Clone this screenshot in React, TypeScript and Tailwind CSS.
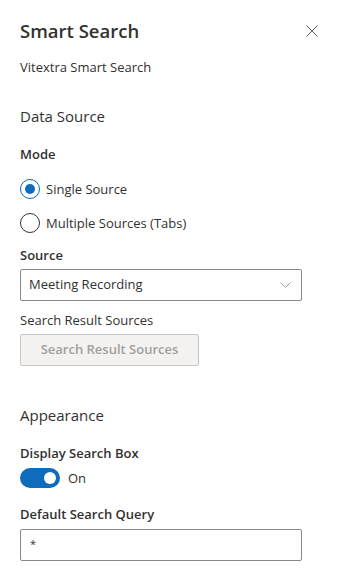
import React from "react";

const font = { fontFamily: '"Segoe UI", "Open Sans", "Liberation Sans", sans-serif' };

const Label = ({ children, className = "" }: { children: React.ReactNode; className?: string }) => (
  <div className={`text-[13px] leading-[20px] font-semibold text-[#323130] ${className}`}>{children}</div>
);

const Radio = ({ checked, label, className = "" }: { checked?: boolean; label: string; className?: string }) => (
  <div className={`flex items-center h-[20px] ${className}`}>
    <span
      className={`w-[20px] h-[20px] rounded-full border flex items-center justify-center ${
        checked ? "border-[#0f6cbd]" : "border-[#323130]"
      }`}
    >
      {checked && <span className="w-[10px] h-[10px] rounded-full bg-[#0f6cbd]" />}
    </span>
    <span className="ml-[6px] text-[13px] leading-[20px] text-[#323130]">{label}</span>
  </div>
);

export default function App() {
  return (
    <div className="w-[340px] h-[574px] bg-white overflow-hidden pl-[20px]" style={font}>
      {/* HEADER */}
      <div className="flex items-center justify-between pt-[17px] pr-[20px]">
        <h1 className="text-[18.5px] leading-[28px] font-semibold text-[#323130]">Smart Search</h1>
        <svg width="12" height="12" viewBox="0 0 12 12" className="mr-[2px]">
          <path d="M0.5 0.5 L11.5 11.5 M11.5 0.5 L0.5 11.5" stroke="#605e5c" strokeWidth="1" />
        </svg>
      </div>
      <p className="mt-[12px] text-[13px] leading-[20px] text-[#323130]">Vitextra Smart Search</p>

      {/* DATA SOURCE */}
      <div className="mt-[29px] text-[15px] leading-[20px] text-[#323130]">Data Source</div>
      <Label className="mt-[18px]">Mode</Label>
      <Radio checked label="Single Source" className="mt-[15px]" />
      <Radio label="Multiple Sources (Tabs)" className="mt-[14px]" />

      <Label className="mt-[12px]">Source</Label>
      <div className="mt-[4px] w-[282px] h-[32px] border border-[#8a8886] rounded-[2px] flex items-center justify-between pl-[8px] pr-[10px]">
        <span className="text-[13px] text-[#323130]">Meeting Recording</span>
        <svg width="11" height="6" viewBox="0 0 11 6">
          <path d="M0.5 0.5 L5.5 5.5 L10.5 0.5" fill="none" stroke="#a19f9d" strokeWidth="1" />
        </svg>
      </div>

      <div className="mt-[9px] text-[13px] leading-[20px] text-[#323130]">Search Result Sources</div>
      <button
        disabled
        className="mt-[4px] w-[179px] h-[32px] bg-[#f3f2f1] border border-[#c8c6c4] rounded-[2px] text-[13px] font-semibold text-[#a19f9d]"
      >
        Search Result Sources
      </button>

      {/* APPEARANCE */}
      <div className="mt-[39px] text-[15px] leading-[20px] text-[#323130]">Appearance</div>
      <Label className="mt-[18px]">Display Search Box</Label>
      <div className="mt-[5px] flex items-center h-[20px]">
        <span className="w-[40px] h-[20px] rounded-full bg-[#0f6cbd] flex items-center justify-end pr-[4px]">
          <span className="w-[12px] h-[12px] rounded-full bg-white" />
        </span>
        <span className="ml-[8px] text-[13px] leading-[20px] text-[#323130]">On</span>
      </div>

      <Label className="mt-[16px]">Default Search Query</Label>
      <div className="mt-[5px] w-[282px] h-[32px] border border-[#8a8886] rounded-[2px] flex items-center pl-[9px]">
        <span className="text-[11px] leading-none text-[#323130] -mt-[4px]">*</span>
      </div>
    </div>
  );
}
